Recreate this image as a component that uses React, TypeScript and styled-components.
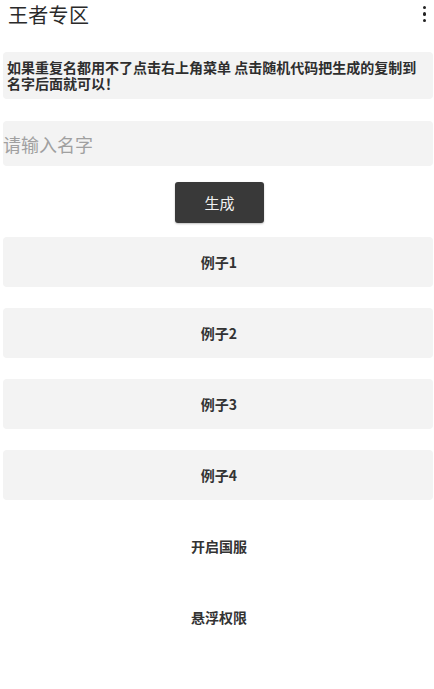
import React from "react";
import styled, { createGlobalStyle } from "styled-components";

const Global = createGlobalStyle`
  html, body { margin: 0; padding: 0; background: #fff; }
  body { font-family: "Noto Sans CJK SC", "Noto Sans", sans-serif; color: #333; }
`;

const Page = styled.div`
  width: 434px;
  min-height: 689px;
  box-sizing: border-box;
  padding: 0 1px 0 3px;
  display: flex;
  flex-direction: column;
  background: #fff;
`;

const TopBar = styled.div`
  height: 30px;
  display: flex;
  align-items: center;
  justify-content: space-between;
  padding: 0 7px 0 5px;
`;

const Title = styled.h1`
  margin: 0;
  font-size: 20px;
  font-weight: 400;
  color: #2a2a2a;
  letter-spacing: 0.3px;
  line-height: 30px;
`;

const MenuDots = styled.div`
  display: flex;
  flex-direction: column;
  gap: 3px;
  margin-top: -2px;
  span {
    width: 3.5px;
    height: 3.5px;
    border-radius: 50%;
    background: #222;
  }
`;

const Notice = styled.div`
  margin-top: 22px;
  background: #f3f3f3;
  border-radius: 4px;
  padding: 7px 12px 8px 4px;
  font-size: 14px;
  font-weight: 700;
  line-height: 16px;
  color: #2e2e2e;
`;

const Input = styled.input`
  margin-top: 22px;
  height: 45px;
  border: none;
  outline: none;
  background: #f3f3f3;
  border-radius: 4px;
  padding: 0;
  font-family: inherit;
  font-size: 18px;
  color: #333;
  &::placeholder { color: #a0a0a0; }
`;

const GenerateRow = styled.div`
  display: flex;
  justify-content: center;
  margin-top: 16px;
  padding-left: 3px;
`;

const GenerateButton = styled.button`
  width: 89px;
  height: 41px;
  border: none;
  border-radius: 3px;
  background: #393939;
  color: #f2f2f2;
  font-family: inherit;
  font-size: 15px;
  box-shadow: 0 1px 2px rgba(0,0,0,0.25);
`;

const List = styled.div`
  display: flex;
  flex-direction: column;
  gap: 21px;
  margin-top: 14px;
`;

const Card = styled.button<{ $plain?: boolean }>`
  height: 50px;
  border: none;
  border-radius: 4px;
  background: ${(p) => (p.$plain ? "transparent" : "#f3f3f3")};
  font-family: inherit;
  font-size: 14px;
  font-weight: 700;
  color: #333;
  display: flex;
  align-items: center;
  justify-content: center;
  padding: 0 0 0 2px;
`;

export default function App() {
  return (
    <>
      <Global />
      <Page>
        <TopBar>
          <Title>王者专区</Title>
          <MenuDots>
            <span />
            <span />
            <span />
          </MenuDots>
        </TopBar>
        <Notice>如果重复名都用不了点击右上角菜单 点击随机代码把生成的复制到名字后面就可以！</Notice>
        <Input placeholder="请输入名字" />
        <GenerateRow>
          <GenerateButton>生成</GenerateButton>
        </GenerateRow>
        <List>
          <Card>例子1</Card>
          <Card>例子2</Card>
          <Card>例子3</Card>
          <Card>例子4</Card>
          <Card $plain>开启国服</Card>
          <Card $plain>悬浮权限</Card>
        </List>
      </Page>
    </>
  );
}
